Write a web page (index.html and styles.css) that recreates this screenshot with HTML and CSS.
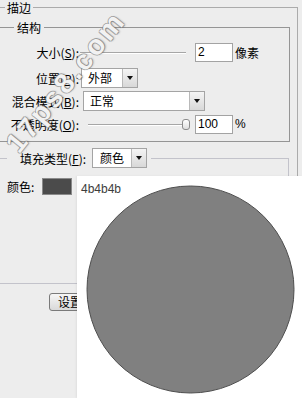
FILE: index.html
```html
<!DOCTYPE html>
<html lang="zh-CN">
<head>
<meta charset="utf-8">
<title>描边</title>
<link rel="stylesheet" href="styles.css">
</head>
<body>
<div class="dialog">
  <fieldset class="grp grp-outer">
    <legend class="lg lg-outer">描边</legend>
    <fieldset class="grp grp-inner">
      <legend class="lg lg-inner">结构</legend>
      <div class="rows">
        <div class="row row-size">
          <span class="lbl">大小(<u>S</u>):</span>
          <div class="slider slider-size"><span class="track"></span></div>
          <div class="field">2</div>
          <span class="unit">像素</span>
        </div>
        <div class="row row-pos">
          <span class="lbl">位置(<u>P</u>):</span>
          <div class="select sel-pos"><span class="sel-text">外部</span><span class="sel-btn"><i class="tri"></i></span></div>
        </div>
        <div class="row row-blend">
          <span class="lbl">混合模式(<u>B</u>):</span>
          <div class="select sel-blend"><span class="sel-text">正常</span><span class="sel-btn"><i class="tri"></i></span></div>
        </div>
        <div class="row row-op">
          <span class="lbl">不透明度(<u>O</u>):</span>
          <div class="slider slider-op"><span class="track"></span><span class="thumb"></span></div>
          <div class="field">100</div>
          <span class="unit unit-pct">%</span>
        </div>
      </div>
    </fieldset>
    <fieldset class="grp grp-fill">
      <legend class="lg lg-fill"><span class="fill-head"><span class="fill-lbl">填充类型(<u>F</u>):</span><span class="select sel-fill"><span class="sel-text">颜色</span><span class="sel-btn"><i class="tri"></i></span></span></span></legend>
      <div class="color-row"><span class="color-lbl">颜色:</span><span class="swatch"></span></div>
    </fieldset>
  </fieldset>
  <button class="btn" type="button">设置</button>
</div>
<div class="canvas">
  <div class="hex">4b4b4b</div>
  <svg class="circle" width="209" height="209" viewBox="0 0 209 209"><circle cx="104.5" cy="104.5" r="103.5" fill="#808080" stroke="#4e4e4e" stroke-width="1"/></svg>
</div>
<div class="wm">17ps8.com</div>
</body>
</html>
```
FILE: styles.css
```css
html, body {
  margin: 0;
  padding: 0;
}
body {
  width: 302px;
  height: 398px;
  overflow: hidden;
  position: relative;
  background: #ededed;
  font-family: "Noto Sans CJK SC", "Noto Sans", sans-serif;
  font-size: 12px;
  color: #000;
}
.dialog {
  width: 302px;
}
u {
  text-decoration: underline;
  text-underline-offset: 1px;
}
.grp {
  margin: 0;
  padding: 0;
  min-width: 0;
  border: 1px solid #a9a9a9;
}
.lg {
  padding: 0 2px;
  line-height: 15px;
  height: 15px;
}
.grp-outer {
  margin: 0 4px 0 -10px;
  padding: 5px 7px 0 14px;
  border-bottom: 0;
  border-color: #ababab;
}
.grp-inner {
  margin: 0 0 0 -11px;
  padding: 0 0 7px 19px;
  border-color: #959595;
}
.lg-inner {
  padding: 0 3px;
}
.rows {
  margin: 8px 0 0 -15px;
  display: flex;
  flex-direction: column;
}
.row {
  display: flex;
  align-items: center;
  height: 19px;
}
.row-pos { margin-top: 6px; height: 20px; }
.row-blend { margin-top: 3px; height: 20px; }
.row-op { margin-top: 4px; }
.lbl {
  width: 80px;
  flex: none;
  text-align: right;
  white-space: nowrap;
  line-height: 15px;
}
.slider {
  display: flex;
  align-items: center;
  height: 19px;
}
.track {
  flex: 1;
  height: 1px;
  background: #a6a6a6;
  box-shadow: 0 1px 0 #ffffff;
}
.slider-size {
  width: 106px;
  margin-left: 1px;
}
.slider-op {
  width: 102px;
  margin-left: 9px;
}
.thumb {
  width: 8px;
  height: 11px;
  box-sizing: border-box;
  margin-left: -1px;
  border: 1px solid #8c8c8c;
  border-radius: 3px;
  background: linear-gradient(#ffffff, #dedede);
}
.field {
  box-sizing: border-box;
  width: 38px;
  height: 19px;
  border: 1px solid #a3a3a3;
  background: #fff;
  font-family: "Liberation Sans", Arial, sans-serif;
  font-size: 12px;
  line-height: 17px;
  padding-left: 2px;
}
.slider-size + .field { margin-left: 9px; }
.slider-op + .field { margin-left: 5px; }
.unit {
  margin-left: 2px;
  line-height: 15px;
}
.unit-pct {
  font-family: "Liberation Sans", Arial, sans-serif;
}
.select {
  box-sizing: border-box;
  display: flex;
  height: 20px;
  border: 1px solid #a4a4a4;
  background: #fff;
}
.sel-text {
  flex: 1;
  padding-left: 6px;
  line-height: 18px;
  white-space: nowrap;
}
.sel-btn {
  width: 14px;
  flex: none;
  display: flex;
  align-items: center;
  justify-content: center;
  border-left: 1px solid #b9b9b9;
  background: linear-gradient(#f4f4f4, #d8d8d8);
}
.tri {
  display: block;
  width: 0;
  height: 0;
  border-left: 3.5px solid transparent;
  border-right: 3.5px solid transparent;
  border-top: 4px solid #111;
}
.sel-pos { width: 57px; margin-left: 2px; }
.sel-blend { width: 122px; margin-left: 4px; }
.grp-fill {
  margin: 6px 1px 0 -9px;
  padding: 0 0 88px 10px;
  border-color: #c3c3cb;
}
.lg-fill {
  padding: 0 4px 0 13px;
  height: 20px;
  line-height: 20px;
}
.fill-head {
  display: flex;
  align-items: center;
  height: 20px;
}
.fill-lbl {
  line-height: 15px;
  white-space: nowrap;
}
.sel-fill {
  width: 55px;
  margin-left: 6px;
}
.sel-fill .sel-text { padding-left: 7px; }
.color-row {
  display: flex;
  align-items: center;
  margin-top: 10px;
  height: 17px;
}
.color-lbl {
  line-height: 15px;
}
.swatch {
  box-sizing: border-box;
  width: 30px;
  height: 17px;
  margin-left: 8px;
  background: #4b4b4b;
  border: 1px solid #8a8a8a;
}
.btn {
  display: block;
  box-sizing: border-box;
  margin: 9px 0 0 49px;
  width: 80px;
  height: 18px;
  padding: 0 0 0 8px;
  text-align: left;
  font-family: "Noto Sans CJK SC", sans-serif;
  font-size: 12px;
  line-height: 16px;
  color: #000;
  border: 1px solid #7a7a7a;
  border-radius: 3px;
  background: linear-gradient(#f6f6f6, #d9d9d9);
}
.canvas {
  position: absolute;
  left: 77px;
  top: 176px;
  right: 0;
  bottom: 0;
  background: #ffffff;
  box-shadow: -1px 0 2px rgba(0, 0, 0, 0.06);
}
.hex {
  padding: 6px 0 0 4px;
  font-family: "Liberation Sans", Arial, sans-serif;
  font-size: 12px;
  line-height: 14px;
  color: #3c3c3c;
}
.circle {
  position: absolute;
  left: 9px;
  top: 9px;
}
.wm {
  position: absolute;
  left: 66px;
  top: 82px;
  transform: translate(-50%, -50%) rotate(-51deg);
  font-family: "Liberation Sans", Arial, sans-serif;
  font-weight: bold;
  font-size: 28px;
  letter-spacing: 3px;
  white-space: nowrap;
  color: rgba(255, 255, 255, 0.92);
  text-shadow: 1px 0 0 rgba(120, 120, 120, 0.55), -1px 0 0 rgba(120, 120, 120, 0.55), 0 1px 0 rgba(120, 120, 120, 0.55), 0 -1px 0 rgba(120, 120, 120, 0.55), 1px 1px 2px rgba(0, 0, 0, 0.25);
}
```
